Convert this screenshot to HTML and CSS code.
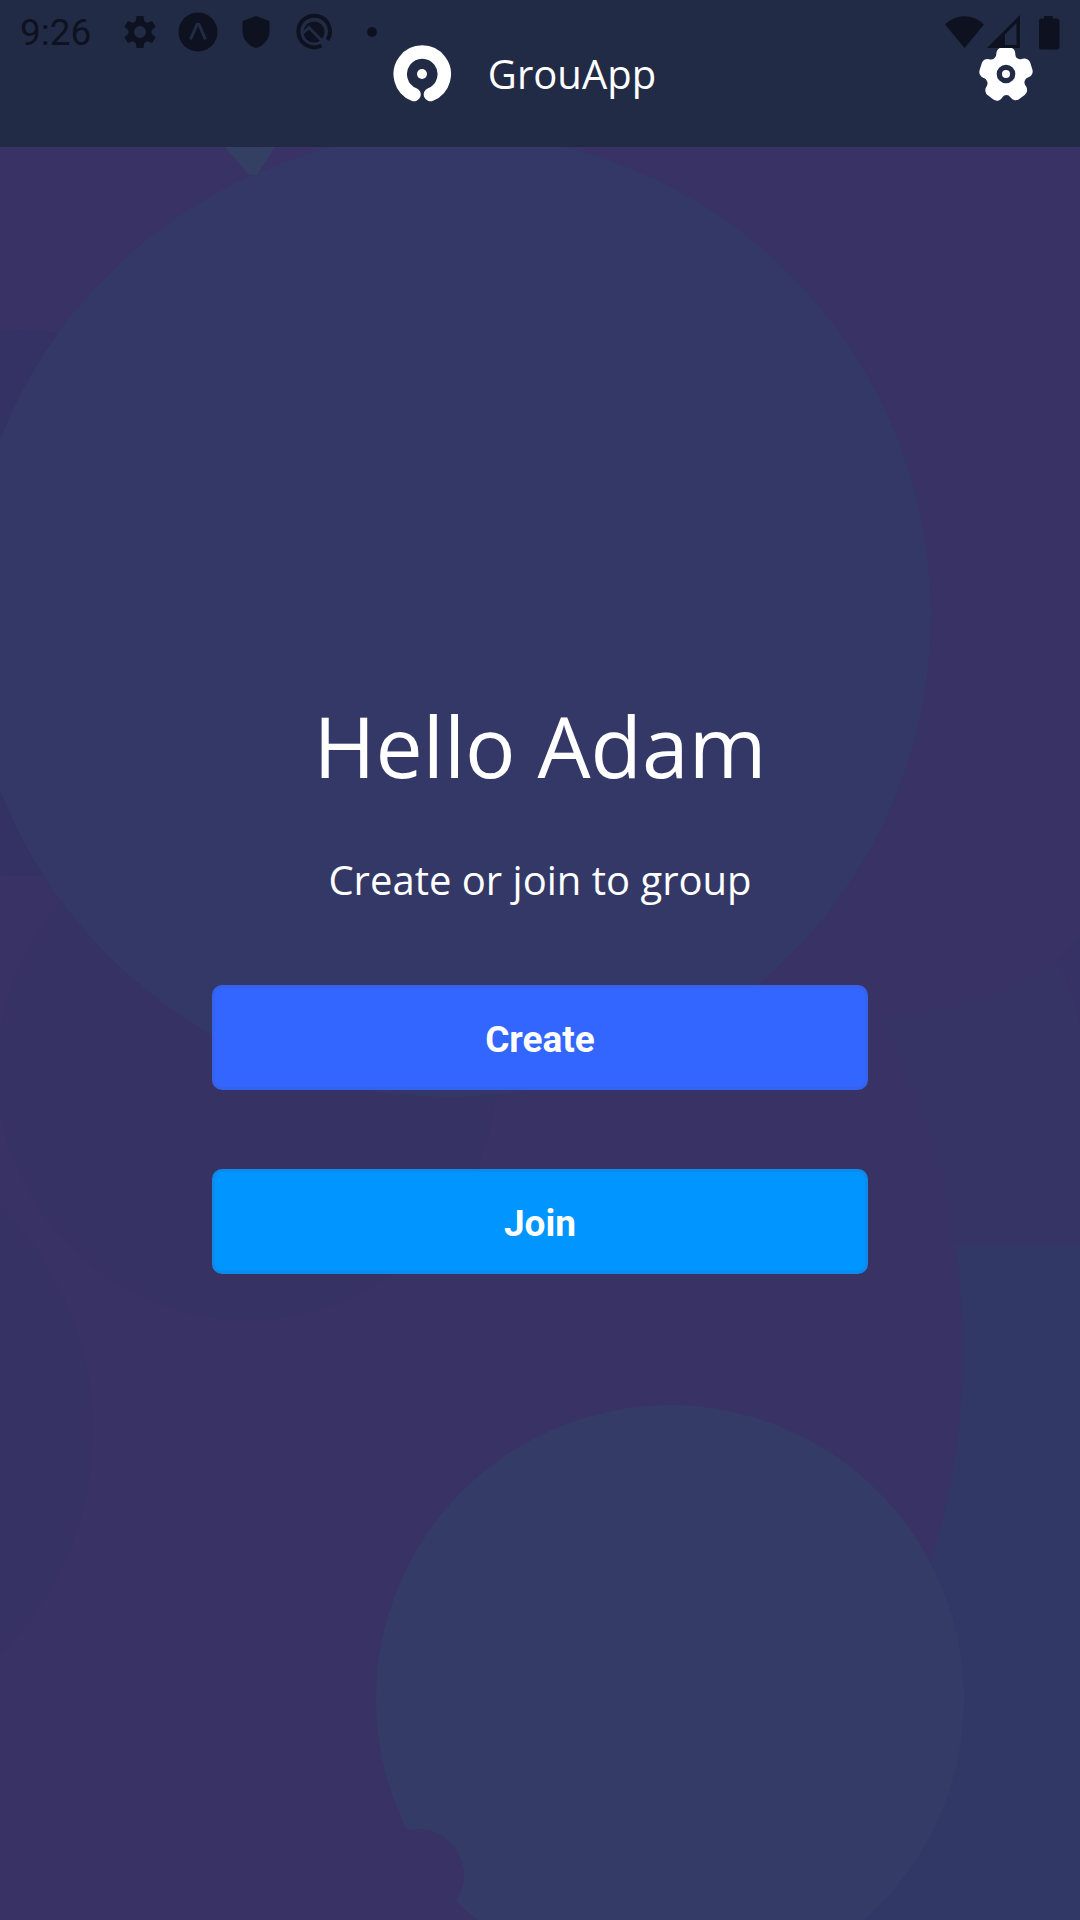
FILE: index.html
```
<!DOCTYPE html>
<html lang="en">
<head>
  <meta charset="UTF-8">
  <meta name="viewport" content="width=device-width, initial-scale=1.0">
  <title>GrouApp</title>
  <link rel="stylesheet" href="styles.css">
</head>
<body>
  <header class="header">
    <div class="status-bar">
      <div class="status-left">
        <span class="clock">9:26</span>
        <!-- settings -->
        <svg class="status-icon" viewBox="0 0 40 40">
          <g transform="translate(20 20)">
            <path fill-rule="evenodd" d="M0-11.500a11.500 11.500 0 1 0 0 23a11.500 11.500 0 1 0 0-23zM0-6a6 6 0 1 1 0 12a6 6 0 1 1 0-12z"/>
            <path id="tooth" d="M-4.500-9l1-7h7l1 7z"/>
            <use href="#tooth" transform="rotate(60)"/>
            <use href="#tooth" transform="rotate(120)"/>
            <use href="#tooth" transform="rotate(180)"/>
            <use href="#tooth" transform="rotate(240)"/>
            <use href="#tooth" transform="rotate(300)"/>
          </g>
        </svg>
        <!-- expo -->
        <svg class="status-icon" viewBox="0 0 40 40">
          <circle cx="20" cy="20" r="19.500"/>
          <path class="cut" d="M12.500 27.500L19 12.500h2l6.500 15" stroke-width="3"/>
        </svg>
        <!-- shield -->
        <svg class="status-icon" viewBox="0 0 40 40">
          <path d="M20 4l13.500 5v10c0 8-5.500 14.500-13.500 17c-8-2.500-13.500-9-13.500-17V9z"/>
        </svg>
        <!-- search badge -->
        <svg class="status-icon" viewBox="0 0 40 40">
          <path d="M27.500 33.500A15.800 15.800 0 1 1 33.500 28" fill="none" stroke="#0e1220" stroke-width="4"/>
          <circle cx="20" cy="20" r="10.500"/>
          <path class="cut" d="M8 22l7-6.500L30 31" stroke-width="3"/>
        </svg>
        <svg class="status-icon" viewBox="0 0 40 40">
          <circle cx="20" cy="20" r="5"/>
        </svg>
      </div>
      <div class="status-right">
        <svg class="status-icon" viewBox="0 0 40 40">
          <path d="M20.500 36L1 12.500C12 1.500 29 1.500 40 12.500z"/>
        </svg>
        <svg class="status-icon" viewBox="0 0 40 40">
          <path fill-rule="evenodd" d="M1 36L34 3v33zM19 22.500v10.500h11.500V11z"/>
        </svg>
        <svg class="status-icon" viewBox="0 0 40 40">
          <path d="M16 4h9v2.500h4q2.500 0 2.500 2.500v26q0 2.500-2.500 2.500h-15.500q-2.500 0-2.500-2.500v-26q0-2.500 2.500-2.500h2.500z"/>
        </svg>
      </div>
    </div>
    <div class="brand">
      <svg class="logo" viewBox="0 0 60 60">
        <path d="M22 50.500A22 22 0 1 1 38.500 50.500" fill="none" stroke="#fff" stroke-width="13.500" stroke-linecap="round"/>
        <circle cx="30" cy="30" r="5" fill="#fff"/>
      </svg>
      <span class="brand-name">GrouApp</span>
    </div>
    <button class="settings-btn" type="button" aria-label="Settings">
      <svg viewBox="0 0 24 24">
        <circle cx="12" cy="12" r="1.500"/>
        <path d="M21.890 10.320L21.100 7.800a2.260 2.260 0 0 0-2.880-1.510l-.34.11a1.740 1.740 0 0 1-1.590-.26l-.11-.08a1.760 1.760 0 0 1-.69-1.430v-.28a2.370 2.370 0 0 0-.68-1.680 2.260 2.260 0 0 0-1.600-.67h-2.550a2.320 2.320 0 0 0-2.290 2.330v.24a1.940 1.940 0 0 1-.73 1.510l-.13.1a1.930 1.930 0 0 1-1.780.29 2.140 2.140 0 0 0-1.680.12 2.180 2.180 0 0 0-1.120 1.330l-.82 2.600a2.340 2.340 0 0 0 1.480 2.940h.16a1.830 1.830 0 0 1 1.120 1.220l.06.16a2.060 2.060 0 0 1-.23 1.860 2.370 2.370 0 0 0 .49 3.300l2.070 1.570a2.250 2.250 0 0 0 1.350.43A2 2 0 0 0 9 22a2.250 2.250 0 0 0 1.470-1l.23-.33a1.800 1.800 0 0 1 1.430-.77 1.750 1.750 0 0 1 1.500.78l.12.17a2.240 2.240 0 0 0 3.220.53L19 19.860a2.380 2.380 0 0 0 .5-3.230l-.26-.38A2 2 0 0 1 19 14.600a1.890 1.890 0 0 1 1.210-1.280l.2-.07a2.360 2.360 0 0 0 1.480-2.930zM12 15.500a3.500 3.500 0 1 1 3.500-3.500 3.500 3.500 0 0 1-3.500 3.500z"/>
      </svg>
    </button>
  </header>

  <main class="home">
    <!-- background shapes -->
    <svg class="backdrop" viewBox="0 147 1080 1773" preserveAspectRatio="xMidYMid slice" aria-hidden="true">
      <path fill="#353465" d="M860 1019Q990 1010 1056 960Q1072 985 1080 1025V1250H860z"/>
      <path fill="#373265" d="M1056 960L1080 935V1025Q1072 985 1056 960z"/>
      <rect x="600" y="1245" width="480" height="675" fill="#323866"/>
      <circle cx="263" cy="1350" r="700" fill="#393265"/>
      <circle cx="-225" cy="1430" r="318" fill="#373264"/>
      <circle cx="20" cy="603" r="273" fill="#343264"/>
      <circle cx="247" cy="1070" r="250" fill="#373264"/>
      <circle cx="449" cy="615" r="482" fill="#343866"/>
      <path fill="#334063" d="M225 147h50l-18 28h-8z"/>
      <circle cx="670" cy="1699" r="294" fill="#343b66"/>
      <circle cx="418" cy="1875" r="46" fill="#393265"/>
      <circle cx="440" cy="1960" r="55" fill="#393265"/>
    </svg>
    <h1 class="greeting">Hello Adam</h1>
    <p class="hint">Create or join to group</p>
    <div class="actions">
      <button class="btn btn-primary" type="button">Create</button>
      <button class="btn btn-info" type="button">Join</button>
    </div>
  </main>
</body>
</html>
```
FILE: styles.css
```
:root {
  --header: #222b45;
  --status: #0e1220;
  --background: #393265;
  --primary: #3366ff;
  --info: #0095ff;
}
* {
  box-sizing: border-box;
}
body {
  margin: 0;
  min-height: 100vh;
  display: flex;
  flex-direction: column;
  background: var(--background);
  color: #fff;
  font-family: 'Open Sans', sans-serif;
}
.header {
  position: relative;
  display: grid;
  grid-template-columns: 1fr auto 1fr;
  align-items: center;
  height: 147px;
  padding: 0 42px;
  background: var(--header);
}
/* system bar lies over the top of the header */
.status-bar {
  position: absolute;
  top: 0;
  left: 0;
  right: 0;
  display: flex;
  justify-content: space-between;
  align-items: center;
  height: 64px;
  padding: 0 12px 0 20px;
  color: var(--status);
}
.status-left {
  display: flex;
  align-items: center;
  gap: 18px;
}
.status-right {
  display: flex;
  gap: 2px;
}
.clock {
  width: 82px;
  font-family: Roboto, sans-serif;
  font-size: 37px;
}
.status-icon {
  display: block;
  width: 40px;
  height: 40px;
  fill: var(--status);
}
.status-icon .cut {
  fill: none;
  stroke: var(--header);
}
.brand {
  grid-column: 2;
  display: flex;
  align-items: center;
  gap: 36px;
  padding-right: 32px;
}
.logo {
  width: 60px;
  height: 60px;
}
.brand-name {
  font-size: 40px;
  line-height: 54px;
}
.settings-btn {
  justify-self: end;
  width: 64px;
  height: 64px;
  padding: 0;
  border: none;
  background: none;
  cursor: pointer;
}
.settings-btn svg {
  display: block;
  fill: #fff;
}
.home {
  position: relative;
  flex: 1;
  display: flex;
  flex-direction: column;
  align-items: center;
  justify-content: center;
  padding: 0 20px 105px;
  text-align: center;
}
.backdrop {
  position: absolute;
  top: 0;
  left: 0;
  width: 100%;
  height: 100%;
  z-index: -1;
}
.greeting {
  margin: 0 0 48px;
  font-size: 84px;
  font-weight: 400;
  line-height: 116px;
}
.hint {
  margin: 0 0 77px;
  font-size: 40px;
  line-height: 56px;
}
.actions {
  display: flex;
  flex-direction: column;
  gap: 79px;
  width: 100%;
  max-width: 656px;
}
.btn {
  height: 105px;
  padding: 3px 0 0;
  border: 3px solid;
  border-radius: 10px;
  color: #fff;
  font-family: Roboto, sans-serif;
  font-size: 37px;
  font-weight: 700;
  cursor: pointer;
}
.btn-primary {
  background: var(--primary);
  border-color: #3562ee;
}
.btn-info {
  background: var(--info);
  border-color: #0c8bee;
}
```
